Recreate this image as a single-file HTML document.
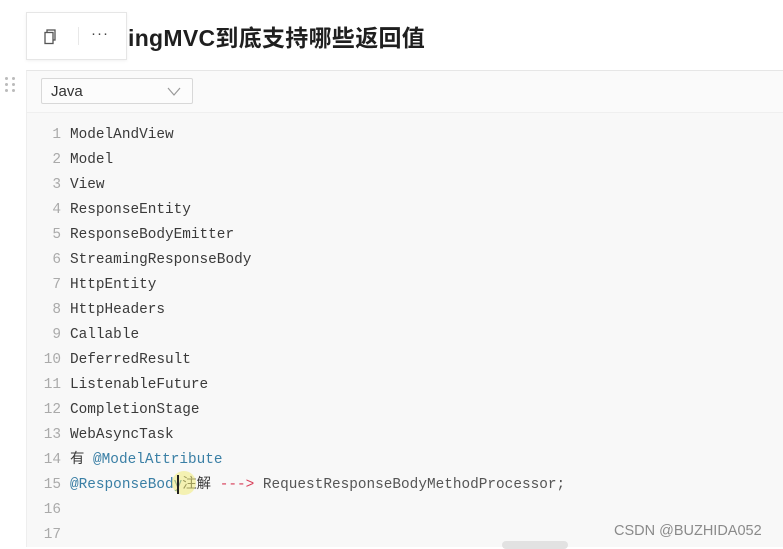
<!DOCTYPE html>
<html><head><meta charset="utf-8"><style>
body{margin:0;width:783px;height:547px;background:#fff;position:relative;overflow:hidden;font-family:"Liberation Sans","Noto Sans CJK SC",sans-serif}
.title{position:absolute;left:128px;top:19px;font-size:23px;font-weight:bold;color:#1f1f1f;letter-spacing:0.3px}
.tb{position:absolute;left:26px;top:12px;width:99px;height:46px;background:#fff;border:1px solid #e6e6e6;box-shadow:0 1px 3px rgba(0,0,0,.06)}
.tb .sep{position:absolute;left:51px;top:14px;width:1px;height:18px;background:#e8e8e8}
.tb .dots{position:absolute;left:64px;top:12px;font-size:15px;color:#444;letter-spacing:1px}
.grip{position:absolute;left:5px;top:77px;width:12px;height:16px}
.grip i{position:absolute;width:3px;height:3px;background:#bbb;border-radius:50%}
.code{position:absolute;left:26px;top:70px;right:0;bottom:0;background:#f8f8f8;border-left:1px solid #eee;border-top:1px solid #e6e6e6}
.hdr{position:absolute;left:0;top:0;right:0;height:41px;background:#fafafa;border-bottom:1px solid #efefef}
.sel{position:absolute;left:14px;top:7px;width:152px;height:26px;background:#fcfcfc;border:1px solid #d8d8d8;border-radius:2px;font-size:15px;color:#333;line-height:26px;padding-left:9px;box-sizing:border-box}
.sel svg{position:absolute;right:11px;top:8px}
.lines{position:absolute;left:0;top:52px;font-family:"Liberation Mono","Noto Sans CJK SC",monospace;font-size:14.4px;line-height:25px;color:#3a3a3a}
.ln{display:inline-block;width:34px;text-align:right;color:#aaa;margin-right:9px}
.a{color:#3a7fa5}.r{color:#d8405a}.g{color:#555}
.wm{position:absolute;left:614px;top:523px;font-size:14.5px;color:#8a8a8a}
.sb{position:absolute;left:502px;top:541px;width:66px;height:8px;background:#e2e2e2;border-radius:4px}
</style></head><body>
<div class="title">ingMVC到底支持哪些返回值</div>
<div class="tb">
<svg style="position:absolute;left:16px;top:16px" width="14" height="16" viewBox="0 0 14 16"><rect x="4" y="1" width="8" height="10" fill="none" stroke="#555" stroke-width="1.3"/><rect x="2" y="3.5" width="8" height="11" fill="#fff" stroke="#555" stroke-width="1.3"/></svg>
<div class="sep"></div><div class="dots">···</div></div>
<div class="grip"><i style="left:0;top:0"></i><i style="left:7px;top:0"></i><i style="left:0;top:6px"></i><i style="left:7px;top:6px"></i><i style="left:0;top:12px"></i><i style="left:7px;top:12px"></i></div>
<div class="code">
<div class="hdr"><div class="sel">Java<svg width="14" height="9" viewBox="0 0 14 9"><path d="M1 1 L7 8 L13 1" fill="none" stroke="#999" stroke-width="1.2"/></svg></div></div>
<div class="lines">
<div><span class="ln">1</span>ModelAndView</div>
<div><span class="ln">2</span>Model</div>
<div><span class="ln">3</span>View</div>
<div><span class="ln">4</span>ResponseEntity</div>
<div><span class="ln">5</span>ResponseBodyEmitter</div>
<div><span class="ln">6</span>StreamingResponseBody</div>
<div><span class="ln">7</span>HttpEntity</div>
<div><span class="ln">8</span>HttpHeaders</div>
<div><span class="ln">9</span>Callable</div>
<div><span class="ln">10</span>DeferredResult</div>
<div><span class="ln">11</span>ListenableFuture</div>
<div><span class="ln">12</span>CompletionStage</div>
<div><span class="ln">13</span>WebAsyncTask</div>
<div><span class="ln">14</span>有 <span class="a">@ModelAttribute</span></div>
<div><span class="ln">15</span><span class="a">@ResponseBody</span>注解 <span class="r">---&gt;</span> <span class="g">RequestResponseBodyMethodProcessor;</span></div>
<div><span class="ln">16</span></div>
<div><span class="ln">17</span></div>
</div>
<div style="position:absolute;left:145px;top:400px;width:24px;height:24px;border-radius:50%;background:rgba(240,235,120,.55)"></div>
<div style="position:absolute;left:150px;top:404px;width:2px;height:19px;background:#222"></div>
</div>
<div class="wm">CSDN @BUZHIDA052</div>
<div class="sb"></div>
</body></html>
